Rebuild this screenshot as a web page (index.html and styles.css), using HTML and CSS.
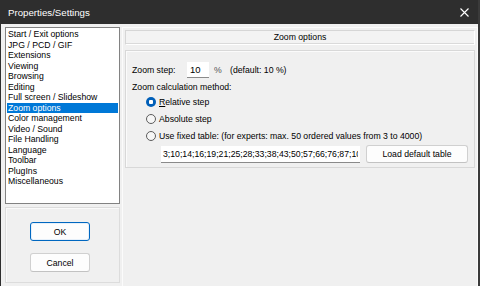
FILE: index.html
```html
<!DOCTYPE html>
<html>
<head>
<meta charset="utf-8">
<link rel="stylesheet" href="styles.css">
</head>
<body>
<div class="window">
  <div class="titlebar">
    <span class="title">Properties/Settings</span>
    <svg class="close" width="9" height="9" viewBox="0 0 9 9"><path d="M0.5 0.5 L8.5 8.5 M8.5 0.5 L0.5 8.5" stroke="#fff" stroke-width="1.1" fill="none"/></svg>
  </div>
  <div class="content">
    <div class="left">
      <ul class="list">
        <li>Start / Exit options</li>
        <li>JPG / PCD / GIF</li>
        <li>Extensions</li>
        <li>Viewing</li>
        <li>Browsing</li>
        <li>Editing</li>
        <li>Full screen / Slideshow</li>
        <li class="selected">Zoom options</li>
        <li>Color management</li>
        <li>Video / Sound</li>
        <li>File Handling</li>
        <li>Language</li>
        <li>Toolbar</li>
        <li>PlugIns</li>
        <li>Miscellaneous</li>
      </ul>
      <div class="btnpanel">
        <button class="btn default">OK</button>
        <button class="btn">Cancel</button>
      </div>
    </div>
    <div class="right">
      <div class="header">Zoom options</div>
      <div class="group">
        <div class="steprow">
          <span class="lbl">Zoom step:</span>
          <input class="stepinput" type="text" value="10">
          <span class="pct">%</span>
          <span>(default: 10 %)</span>
        </div>
        <div class="method">Zoom calculation method:</div>
        <div class="radio"><span class="dot on"></span><span><u>R</u>elative step</span></div>
        <div class="radio"><span class="dot"></span><span>Absolute step</span></div>
        <div class="radio"><span class="dot"></span><span>Use fixed table: (for experts: max. 50 ordered values from 3 to 4000)</span></div>
        <div class="tablerow">
          <input class="tableinput" type="text" value="3;10;14;16;19;21;25;28;33;38;43;50;57;66;76;87;100;115;132;152;175;200">
          <button class="btn load">Load default table</button>
        </div>
      </div>
    </div>
  </div>
</div>
</body>
</html>
```

FILE: styles.css
```css
* { box-sizing: border-box; }
html, body { margin: 0; padding: 0; }
body {
  width: 480px;
  height: 286px;
  overflow: hidden;
  font-family: "Liberation Sans", Arial, sans-serif;
  font-size: 8.7px;
  color: #000;
  background: #f0f0f0;
}
.window {
  width: 480px;
  height: 286px;
  border-left: 1px solid #2e2e2e;
  border-right: 2px solid #3a3a3a;
  display: flex;
  flex-direction: column;
}
.titlebar {
  height: 24px;
  flex: none;
  background: #2e2e2e;
  color: #fff;
  display: flex;
  align-items: center;
  justify-content: space-between;
  padding: 0 9px 0 7px;
}
.title { font-size: 9.7px; margin-top: 1px; }
.close { display: block; }
.content {
  flex: 1;
  display: flex;
  gap: 2px;
  padding: 3px 2px 0 4px;
}
.left {
  width: 115px;
  flex: none;
  display: flex;
  flex-direction: column;
  gap: 3px;
}
.list {
  list-style: none;
  margin: 0;
  padding: 1px;
  height: 177px;
  background: #fff;
  border: 1px solid #828282;
}
.list li {
  height: 10.5px;
  line-height: 10.5px;
  padding-left: 1px;
  white-space: nowrap;
}
.list li.selected {
  background: #0078d7;
  color: #fff;
}
.btnpanel {
  height: 76px;
  border: 1px solid #dcdcdc;
  box-shadow: inset 1px 1px 0 #fafafa;
  display: flex;
  flex-direction: column;
  align-items: flex-start;
  padding: 14px 0 0 24px;
  gap: 12px;
}
.btn {
  font-family: inherit;
  font-size: 8.7px;
  color: #000;
  background: #fdfdfd;
  border: 1px solid #d0d0d0;
  border-bottom-color: #c2c2c2;
  border-radius: 3px;
  padding: 0;
  width: 60px;
  height: 19px;
}
.btn.default {
  border: 1px solid #0067c0;
  box-shadow: inset 0 0 0 1px #e6f0fa;
}
.right {
  flex: 1;
  border: 1px solid #fbfbfb;
  border-bottom: none;
  padding: 2px 2px 0 2px;
  display: flex;
  flex-direction: column;
}
.header {
  height: 15px;
  line-height: 13px;
  text-align: center;
  background: #f3f3f3;
  border: 1px solid #d6d6d6;
  border-bottom-color: #fff;
  border-right-color: #fff;
  box-shadow: inset 0 -1px 0 #dadada;
}
.group {
  margin-top: 5px;
  height: 118px;
  border: 1px solid #d8d8d8;
  box-shadow: inset 1px 1px 0 #fbfbfb;
  padding: 11px 6px 0 6px;
  display: flex;
  flex-direction: column;
}
.steprow {
  height: 16px;
  display: flex;
  align-items: center;
}
.lbl { width: 55px; }
.stepinput {
  width: 22px;
  height: 16px;
  border: none;
  border-bottom: 1px solid #8a8a8a;
  background: #fff;
  font-family: inherit;
  font-size: 9.5px;
  padding: 0 3px;
  outline: none;
}
.pct { margin-left: 5px; width: 16px; color: #555; }
.method {
  margin-top: 3px;
  height: 12px;
  line-height: 12px;
}
.radio {
  height: 17px;
  display: flex;
  align-items: center;
  margin-left: 14px;
  gap: 3px;
}
.dot {
  width: 10px;
  height: 10px;
  border-radius: 50%;
  border: 1px solid #5c5c5c;
  background: #f6f6f6;
  flex: none;
}
.dot.on {
  border: none;
  background: radial-gradient(circle, #fff 0 2px, #005fb8 2.5px);
}
.tablerow {
  margin-top: 1px;
  margin-left: 29px;
  display: flex;
  align-items: center;
  gap: 6px;
}
.tableinput {
  width: 199px;
  height: 17px;
  border: none;
  border-bottom: 1px solid #8a8a8a;
  background: #fff;
  font-family: inherit;
  font-size: 8.7px;
  padding: 0 2px;
  outline: none;
}
.btn.load {
  width: 102px;
  height: 18px;
}
```
